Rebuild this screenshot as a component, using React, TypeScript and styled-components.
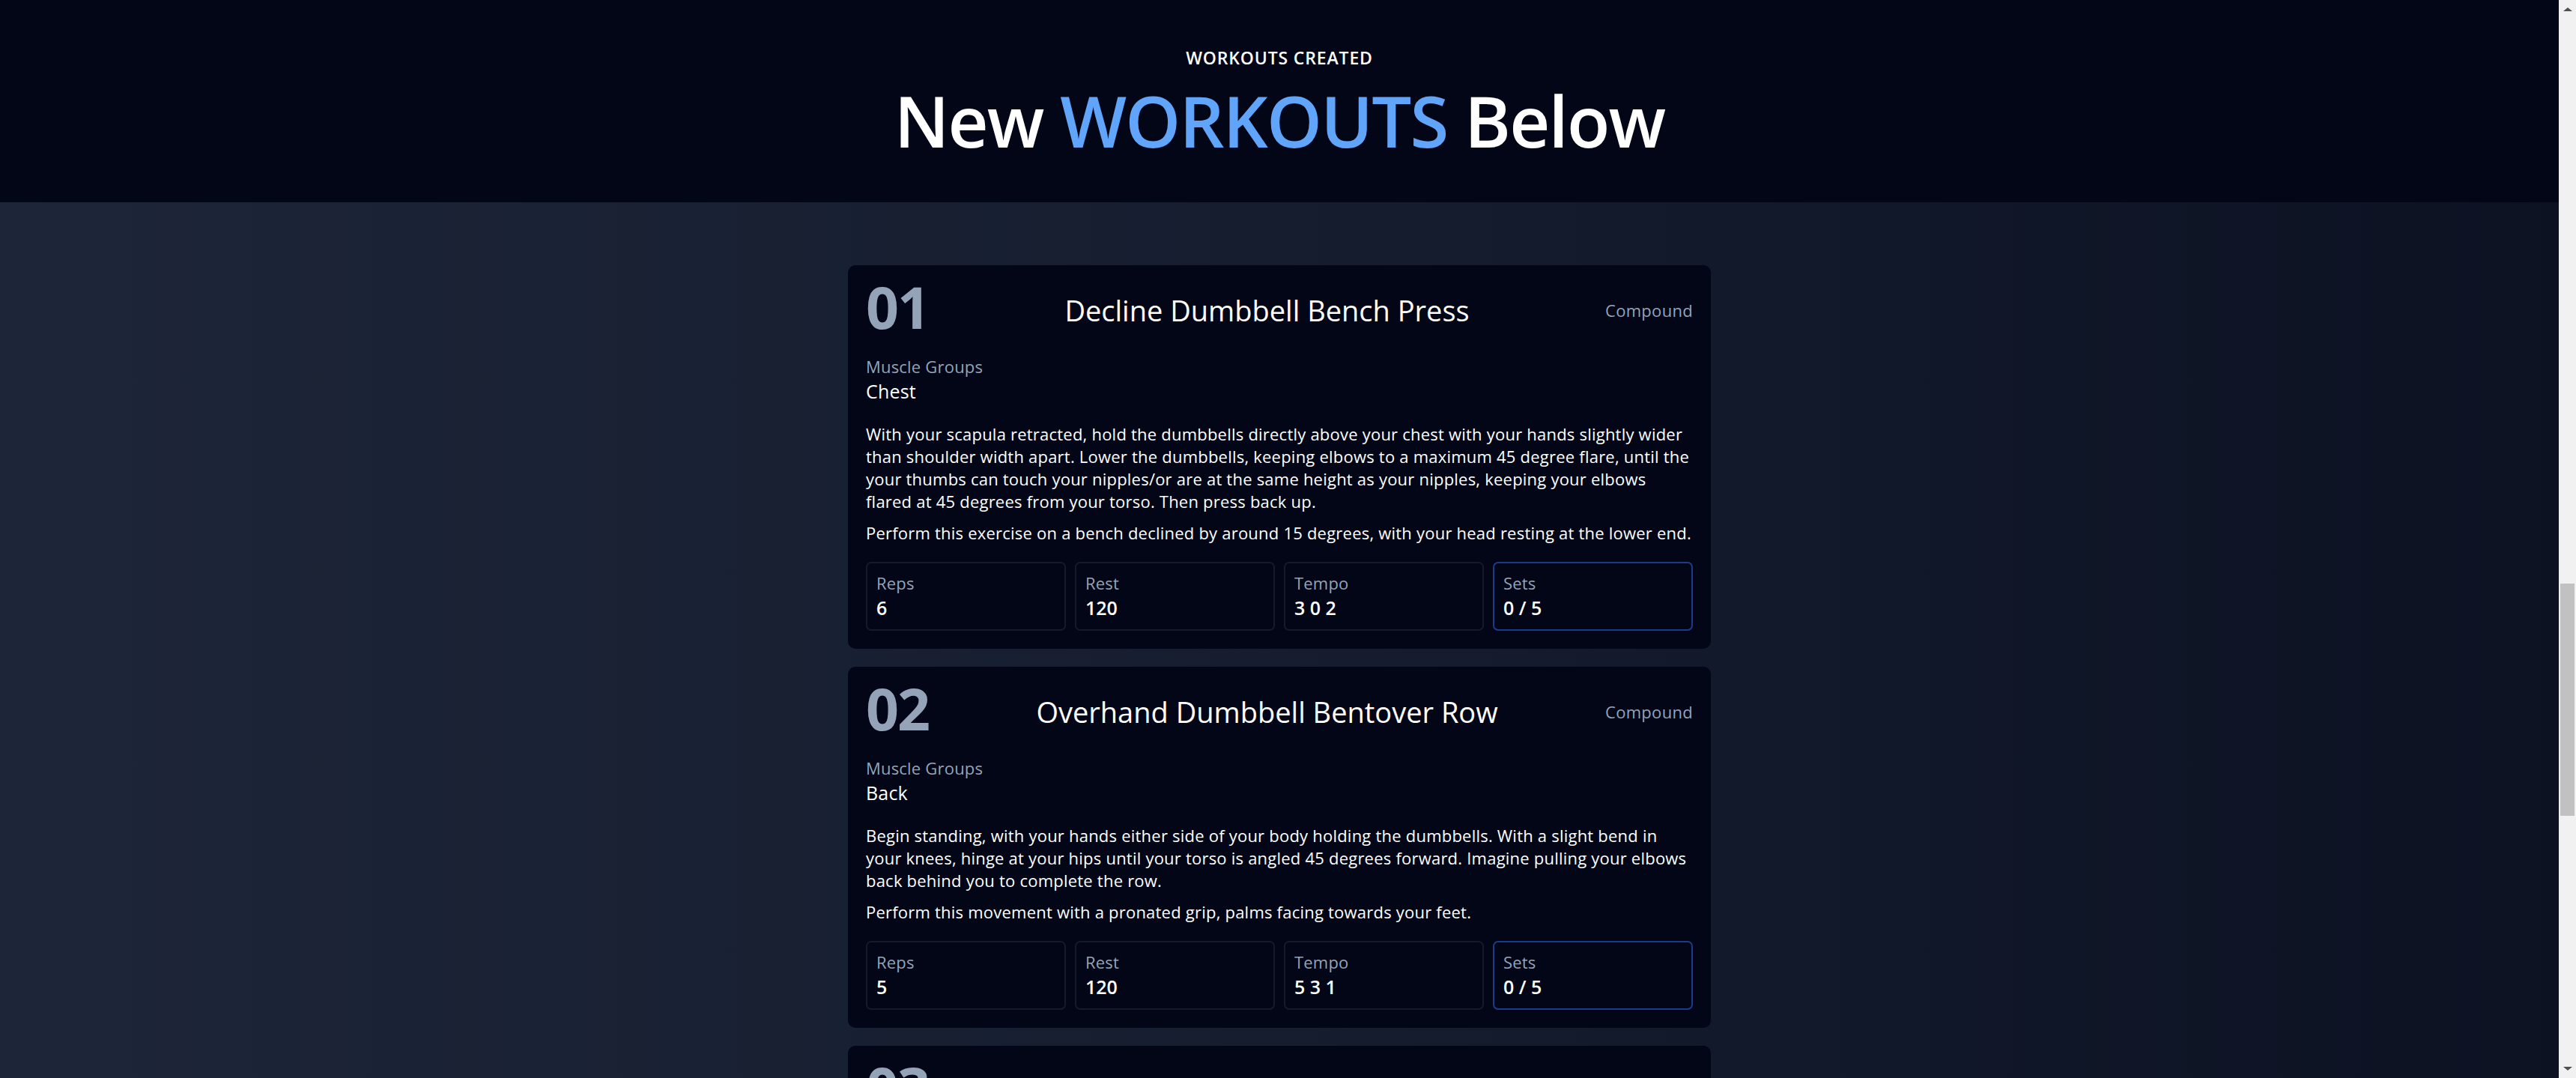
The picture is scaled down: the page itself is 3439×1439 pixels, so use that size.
import React from "react";
import styled, { createGlobalStyle } from "styled-components";

const GlobalStyle = createGlobalStyle`
  html, body {
    margin: 0;
    padding: 0;
    background: #020617;
  }
  body {
    font-family: "Open Sans", "Noto Sans", sans-serif;
    color: #ffffff;
    -webkit-font-smoothing: antialiased;
  }
  * { box-sizing: border-box; }
`;

type Stat = { label: string; value: string; highlight?: boolean };
type Workout = {
  name: string;
  type: string;
  muscles: string;
  description: string[];
  stats: Stat[];
};

const workouts: Workout[] = [
  {
    name: "Decline Dumbbell Bench Press",
    type: "Compound",
    muscles: "Chest",
    description: [
      "With your scapula retracted, hold the dumbbells directly above your chest with your hands slightly wider than shoulder width apart. Lower the dumbbells, keeping elbows to a maximum 45 degree flare, until the your thumbs can touch your nipples/or are at the same height as your nipples, keeping your elbows flared at 45 degrees from your torso. Then press back up.",
      "Perform this exercise on a bench declined by around 15 degrees, with your head resting at the lower end.",
    ],
    stats: [
      { label: "Reps", value: "6" },
      { label: "Rest", value: "120" },
      { label: "Tempo", value: "3 0 2" },
      { label: "Sets", value: "0 / 5", highlight: true },
    ],
  },
  {
    name: "Overhand Dumbbell Bentover Row",
    type: "Compound",
    muscles: "Back",
    description: [
      "Begin standing, with your hands either side of your body holding the dumbbells. With a slight bend in your knees, hinge at your hips until your torso is angled 45 degrees forward. Imagine pulling your elbows back behind you to complete the row.",
      "Perform this movement with a pronated grip, palms facing towards your feet.",
    ],
    stats: [
      { label: "Reps", value: "5" },
      { label: "Rest", value: "120" },
      { label: "Tempo", value: "5 3 1" },
      { label: "Sets", value: "0 / 5", highlight: true },
    ],
  },
  {
    name: "Dumbbell Romanian Deadlift",
    type: "Compound",
    muscles: "Hamstrings",
    description: [
      "Stand tall holding the dumbbells in front of your thighs. With a soft bend in your knees, push your hips back and lower the dumbbells along your legs until you feel a stretch in your hamstrings, then drive your hips forward to stand back up.",
      "Keep your back neutral and the dumbbells close to your body throughout.",
    ],
    stats: [
      { label: "Reps", value: "8" },
      { label: "Rest", value: "90" },
      { label: "Tempo", value: "3 1 1" },
      { label: "Sets", value: "0 / 4", highlight: true },
    ],
  },
];

const Shell = styled.div`
  display: grid;
  grid-template-columns: minmax(0, 1fr) 23px;
  min-height: 100vh;
`;

const Page = styled.div`
  min-height: 100vh;
  display: flex;
  flex-direction: column;
  background: linear-gradient(to right, #1d2638 0%, #151d2f 50%, #0c1222 100%);
`;

const Scrollbar = styled.div`
  position: sticky;
  top: 0;
  align-self: start;
  height: 100vh;
  background: #f1f1f1;
  display: flex;
  flex-direction: column;
`;

const ScrollButton = styled.div`
  height: 25px;
  flex: 0 0 25px;
  display: flex;
  align-items: center;
  justify-content: center;
`;

const Arrow = styled.span<{ $down?: boolean }>`
  width: 0;
  height: 0;
  border-left: 6px solid transparent;
  border-right: 6px solid transparent;
  ${(p) =>
    p.$down
      ? "border-top: 5px solid #505050;"
      : "border-bottom: 5px solid #505050;"}
`;

const ScrollTrack = styled.div`
  flex: 1;
  padding: 754px 2px 0;
`;

const ScrollThumb = styled.div`
  height: 310px;
  background: #c1c1c1;
`;

const Hero = styled.header`
  background: #020617;
  height: 270px;
  padding-top: 62px;
  display: flex;
  flex-direction: column;
  align-items: center;
`;

const Eyebrow = styled.p`
  margin: 0;
  font-size: 23px;
  line-height: 30px;
  font-weight: 600;
  letter-spacing: 0.85px;
  text-transform: uppercase;
  color: #ffffff;
`;

const HeroTitle = styled.h1`
  margin: 22px 0 0;
  font-size: 94px;
  line-height: 94px;
  font-weight: 600;
  letter-spacing: -1.8px;
  color: #ffffff;
`;

const Accent = styled.span`
  color: #60a5fa;
`;

const Section = styled.main`
  padding: 84px 0 80px;
  display: flex;
  justify-content: center;
`;

const CardList = styled.div`
  width: 100%;
  max-width: 1152px;
  display: flex;
  flex-direction: column;
  gap: 24px;
`;

const Card = styled.article`
  background: #020617;
  border-radius: 10px;
  padding: 24px;
  display: flex;
  flex-direction: column;
  gap: 24px;
`;

const CardHeader = styled.div`
  display: flex;
  align-items: center;
  justify-content: space-between;
  height: 72px;
`;

const Index = styled.span`
  font-size: 77px;
  line-height: 64px;
  padding-bottom: 8px;
  font-weight: 700;
  color: #94a3b8;
  letter-spacing: -2px;
`;

const Name = styled.h2`
  margin: 0;
  font-size: 38px;
  line-height: 50px;
  font-weight: 400;
  color: #ffffff;
  text-align: center;
`;

const Kind = styled.span`
  font-size: 22px;
  line-height: 30px;
  letter-spacing: 0.3px;
  color: #94a3b8;
`;

const Muscles = styled.div`
  display: flex;
  flex-direction: column;
`;

const Label = styled.span`
  font-size: 22px;
  line-height: 30px;
  letter-spacing: 0.2px;
  color: #94a3b8;
`;

const MuscleValue = styled.span`
  font-size: 25px;
  line-height: 36px;
  letter-spacing: 0.2px;
  color: #ffffff;
`;

const Description = styled.div`
  display: flex;
  flex-direction: column;
  gap: 12px;
`;

const Paragraph = styled.p`
  margin: 0;
  font-size: 22px;
  line-height: 30px;
  color: #ffffff;
  letter-spacing: 0.22px;
`;

const StatGrid = styled.div`
  display: grid;
  grid-template-columns: repeat(4, 1fr);
  gap: 12px;
`;

const StatBox = styled.div<{ $highlight?: boolean }>`
  display: flex;
  flex-direction: column;
  padding: 11px 12px;
  border: 2px solid ${(p) => (p.$highlight ? "#1e3a8a" : "#141b2b")};
  border-radius: 7px;
`;

const StatValue = styled.span`
  font-size: 25px;
  line-height: 36px;
  font-weight: 600;
  color: #ffffff;
`;

export default function App() {
  return (
    <>
      <GlobalStyle />
      <Shell>
        <Page>
          <Hero>
            <Eyebrow>Workouts Created</Eyebrow>
            <HeroTitle>
              New <Accent>WORKOUTS</Accent> Below
            </HeroTitle>
          </Hero>
          <Section>
            <CardList>
              {workouts.map((w, i) => (
                <Card key={w.name}>
                  <CardHeader>
                    <Index>{String(i + 1).padStart(2, "0")}</Index>
                    <Name>{w.name}</Name>
                    <Kind>{w.type}</Kind>
                  </CardHeader>
                  <Muscles>
                    <Label>Muscle Groups</Label>
                    <MuscleValue>{w.muscles}</MuscleValue>
                  </Muscles>
                  <Description>
                    {w.description.map((d, j) => (
                      <Paragraph key={j}>{d}</Paragraph>
                    ))}
                  </Description>
                  <StatGrid>
                    {w.stats.map((s) => (
                      <StatBox key={s.label} $highlight={s.highlight}>
                        <Label>{s.label}</Label>
                        <StatValue>{s.value}</StatValue>
                      </StatBox>
                    ))}
                  </StatGrid>
                </Card>
              ))}
            </CardList>
          </Section>
        </Page>
        <Scrollbar aria-hidden="true">
          <ScrollButton>
            <Arrow />
          </ScrollButton>
          <ScrollTrack>
            <ScrollThumb />
          </ScrollTrack>
          <ScrollButton>
            <Arrow $down />
          </ScrollButton>
        </Scrollbar>
      </Shell>
    </>
  );
}
